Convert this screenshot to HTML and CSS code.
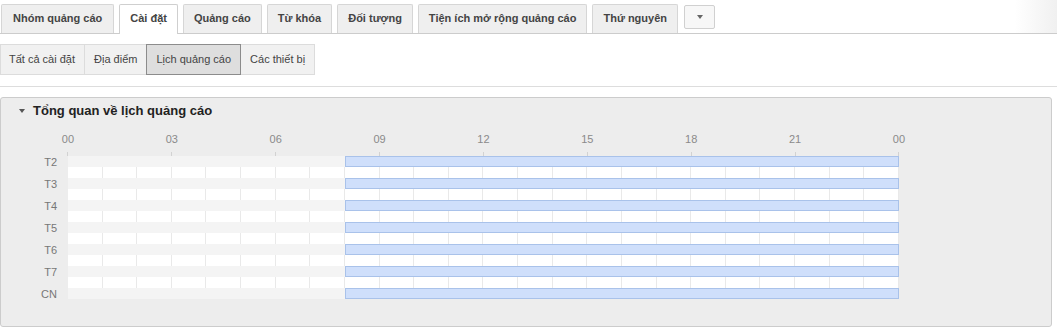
FILE: index.html
```html
<!DOCTYPE html>
<html lang="vi">
<head>
<meta charset="utf-8">
<title>Lịch quảng cáo</title>
<link rel="stylesheet" href="styles.css">
</head>
<body>
<div class="tabs">
  <div class="tab">Nhóm quảng cáo</div>
  <div class="tab active">Cài đặt</div>
  <div class="tab">Quảng cáo</div>
  <div class="tab">Từ khóa</div>
  <div class="tab">Đối tượng</div>
  <div class="tab">Tiện ích mở rộng quảng cáo</div>
  <div class="tab">Thứ nguyên</div>
  <div class="more"><span class="caret"></span></div>
</div>

<div class="subtabs">
  <div class="subtab">Tất cả cài đặt</div>
  <div class="subtab">Địa điểm</div>
  <div class="subtab selected">Lịch quảng cáo</div>
  <div class="subtab">Các thiết bị</div>
</div>

<div class="divider"></div>

<section class="panel">
  <div class="panel-head"><span class="toggle"></span>Tổng quan về lịch quảng cáo</div>

  <div class="axis">
    <span>00</span><span>03</span><span>06</span><span>09</span><span>12</span><span>15</span><span>18</span><span>21</span><span>00</span>
  </div>
  <div class="ticks">
    <span></span><span></span><span></span><span></span><span></span><span></span><span></span><span></span><span></span>
  </div>

  <div class="schedule">
    <div class="day"><div class="day-label">T2</div><div class="band"><div class="on" style="margin-left:33.333%"></div></div></div>
    <div class="gap"></div>
    <div class="day"><div class="day-label">T3</div><div class="band"><div class="on" style="margin-left:33.333%"></div></div></div>
    <div class="gap"></div>
    <div class="day"><div class="day-label">T4</div><div class="band"><div class="on" style="margin-left:33.333%"></div></div></div>
    <div class="gap"></div>
    <div class="day"><div class="day-label">T5</div><div class="band"><div class="on" style="margin-left:33.333%"></div></div></div>
    <div class="gap"></div>
    <div class="day"><div class="day-label">T6</div><div class="band"><div class="on" style="margin-left:33.333%"></div></div></div>
    <div class="gap"></div>
    <div class="day"><div class="day-label">T7</div><div class="band"><div class="on" style="margin-left:33.333%"></div></div></div>
    <div class="gap"></div>
    <div class="day"><div class="day-label">CN</div><div class="band"><div class="on" style="margin-left:33.333%"></div></div></div>
  </div>
</section>
</body>
</html>
```

FILE: styles.css
```css
* { box-sizing: border-box; }

body {
  margin: 0;
  font-family: "Liberation Sans", Arial, sans-serif;
  color: #444;
  background: #fff;
}

/* top tab bar */
.tabs {
  display: flex;
  align-items: flex-end;
  gap: 5px;
  height: 34px;
  padding-left: 1px;
  border-bottom: 1px solid #cccccc;
  background: linear-gradient(to right, #fff 96%, #f0f0f0);
}

.tab {
  height: 29px;
  padding: 0 10px;
  border: 1px solid #d6d6d6;
  border-bottom: none;
  border-radius: 2px 2px 0 0;
  background: #efefef;
  font-size: 11px;
  font-weight: bold;
  line-height: 27px;
  color: #444;
  white-space: nowrap;
}

.tab:first-child { padding: 0 11px; }

.tab.active {
  background: #fff;
  border-color: #cfcfcf;
  height: 30px;
  margin-bottom: -1px;
}

.more {
  align-self: flex-start;
  margin-top: 5px;
  margin-left: 1px;
  width: 31px;
  height: 24px;
  border: 1px solid #d0d0d0;
  border-radius: 2px;
  background: #f7f7f7;
  display: flex;
  align-items: center;
  justify-content: center;
}

.caret {
  width: 0;
  height: 0;
  border-left: 3.5px solid transparent;
  border-right: 3.5px solid transparent;
  border-top: 4px solid #666;
}

/* sub tabs */
.subtabs {
  display: flex;
  margin-top: 10px;
}

.subtab {
  height: 31px;
  padding: 0 9px;
  border: 1px solid #dcdcdc;
  background: #f1f1f1;
  font-size: 11px;
  line-height: 29px;
  color: #444;
  white-space: nowrap;
}

.subtab:first-child { padding: 0 9px 0 8px; }

.subtab + .subtab { margin-left: -1px; }

.subtab.selected {
  background: #dedede;
  border-color: #8c8c8c;
  position: relative;
}

.divider {
  margin-top: 11px;
  border-top: 1px solid #dddddd;
}

/* panel */
.panel {
  margin-top: 10px;
  width: 1052px;
  height: 230px;
  border: 1px solid #cccccc;
  border-radius: 3px;
  background: #ededed;
}

.panel-head {
  display: flex;
  align-items: center;
  padding-top: 5px;
  padding-left: 18px;
  height: 21px;
  font-size: 13px;
  line-height: 16px;
  font-weight: bold;
  color: #222;
}

.toggle {
  width: 0;
  height: 0;
  margin-right: 8px;
  border-left: 3px solid transparent;
  border-right: 3px solid transparent;
  border-top: 4px solid #555;
}

.axis,
.ticks {
  display: grid;
  grid-template-columns: repeat(9, 103.875px);
  margin-left: 15px;
}

.axis {
  margin-top: 14px;
  font-size: 11px;
  line-height: 13px;
  color: #8a8a8a;
  text-align: center;
}

.ticks {
  margin-top: 6px;
  height: 4px;
}

.ticks span {
  justify-self: center;
  width: 1px;
  height: 4px;
  background: #d2d2d2;
}

.schedule {
  display: flex;
  flex-direction: column;
}

.day {
  display: flex;
  height: 11px;
}

.day-label {
  width: 56px;
  margin-right: 11px;
  text-align: right;
  font-size: 11px;
  line-height: 12px;
  color: #777;
}

.band {
  width: 831px;
  height: 11px;
  background: #f4f4f4;
  display: flex;
}

.on {
  flex: 1;
  background: #cfdffb;
  border: 1px solid #a9c2ea;
}

.gap {
  margin-left: 67px;
  width: 831px;
  height: 11px;
  background: repeating-linear-gradient(to right,
    #ffffff 0, #ffffff calc(100% / 24 - 1px),
    #e9e9e9 calc(100% / 24 - 1px), #e9e9e9 calc(100% / 24));
}
```
